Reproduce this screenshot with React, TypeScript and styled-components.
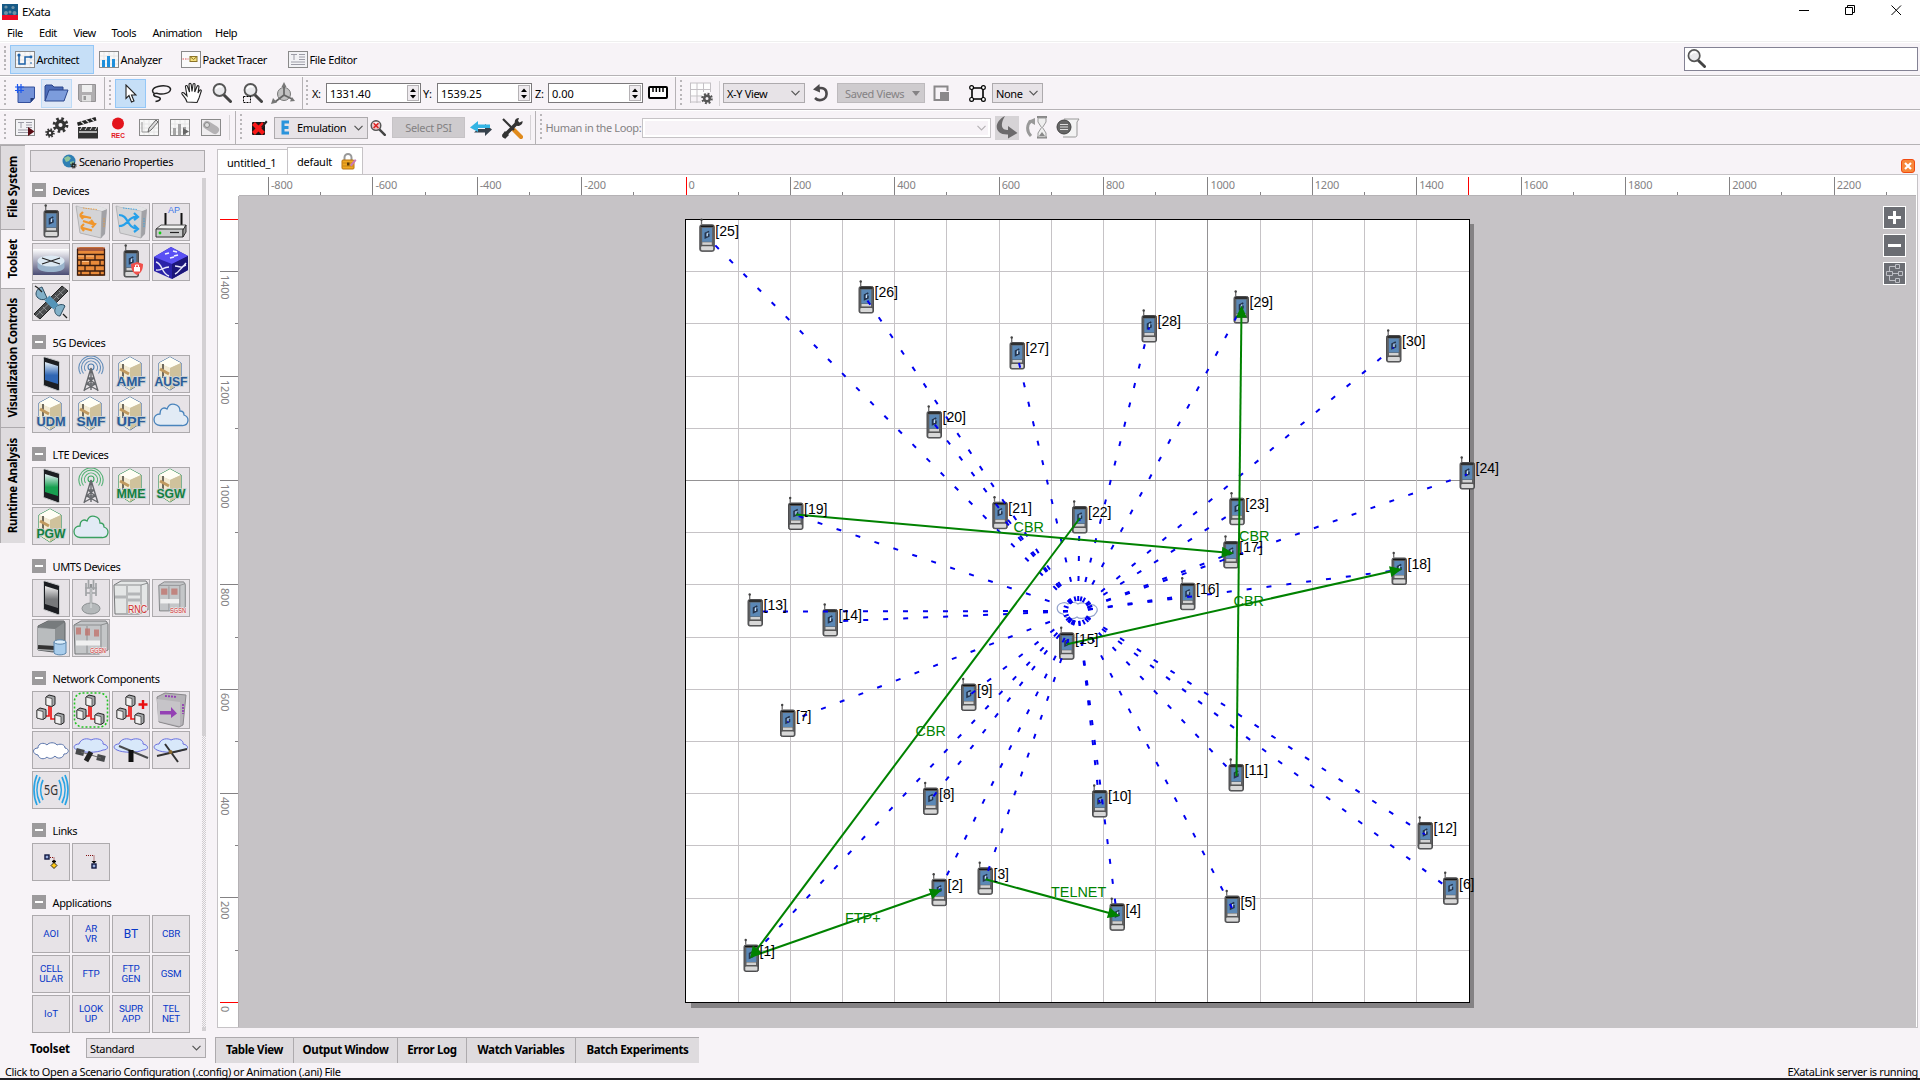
import React from 'react';
import styled, { createGlobalStyle, css } from 'styled-components';

const Global = createGlobalStyle`
  * { box-sizing: border-box; }
  html, body { margin: 0; padding: 0; }
  body { width: 1920px; height: 1080px; overflow: hidden; background: #f7f3f7;
    font-family: 'Noto Sans', 'Open Sans', sans-serif; font-size: 11px; letter-spacing: -0.35px; color: #000; }
  svg { display: block; flex: none; }
  svg text { letter-spacing: 0; }
`;

const Window = styled.div`width: 1920px; height: 1080px; display: flex; flex-direction: column; background: #f7f3f7; overflow: hidden;`;
const TitleBar = styled.div`height: 24px; background: #fff; display: flex; align-items: center; padding-left: 2px;`;
const Title = styled.span`margin: -2px 0 0 4px; flex: 1; font-size: 11.5px;`;
const WinButtons = styled.div`display: flex; gap: 35px; padding-right: 18px; margin-top: -3px;`;
const MenuBar = styled.div`height: 18px; background: #fff; border-bottom: 1px solid #efefef; display: flex; align-items: center; padding-left: 7px; letter-spacing: -0.45px;`;
const MenuItem = styled.span<{ $w: number }>`width: ${p => p.$w}px; white-space: nowrap;`;

const Toolbar = styled.div<{ $h: number }>`height: ${p => p.$h}px; display: flex; align-items: center; border-bottom: 1px solid #b5b2b5; border-top: 1px solid #fff; padding-left: 4px;`;
const Grip = styled.div<{ $ml?: number }>`width: 2px; height: 27px; margin-left: ${p => p.$ml || 0}px; flex: none;
  background: repeating-linear-gradient(#b9b6b9 0 2px, transparent 2px 4.5px);`;
const Sep = styled.div<{ $ml: number }>`width: 1px; align-self: stretch; background: #b5b2b5; margin-left: ${p => p.$ml}px; flex: none;`;
const ThinSep = styled.div<{ $ml: number }>`width: 1px; height: 25px; background: #d6d3d6; margin-left: ${p => p.$ml}px; flex: none;`;
const Slot = styled.div<{ $w: number; $ml?: number; $tone?: 'on' | 'hover' | 'gray' }>`
  width: ${p => p.$w}px; height: 29px; margin-left: ${p => p.$ml || 0}px; display: flex; align-items: center; justify-content: center; flex: none;
  ${p => p.$tone === 'on' && css`background: #c6dff7; border: 1px solid #94c7f7;`}
  ${p => p.$tone === 'hover' && css`background: #dfe8f6; border: 1px solid #bddbf7;`}
  ${p => p.$tone === 'gray' && css`background: #d6d3d6; height: 24px;`}
`;
const ModeButton = styled.div<{ $w: number; $on?: boolean }>`
  width: ${p => p.$w}px; height: 29px; display: flex; align-items: center; gap: 1.5px; padding-left: 4px; flex: none; white-space: nowrap;
  border: 1px solid ${p => (p.$on ? '#94c7f7' : 'transparent')}; background: ${p => (p.$on ? '#c6dff7' : 'transparent')};
`;
const Spacer = styled.div`flex: 1;`;
const SearchBox = styled.div`width: 234px; height: 24px; border: 1px solid #848294; background: #fff; margin-right: 2px; padding: 1px 2px;`;
const Label = styled.span<{ $w: number; $ml?: number; $dim?: boolean }>`width: ${p => p.$w}px; margin-left: ${p => p.$ml || 0}px; white-space: nowrap; flex: none; color: ${p => (p.$dim ? '#848284' : '#000')};`;
const Spin = styled.div<{ $w: number }>`width: ${p => p.$w}px; height: 20px; border: 1px solid #7b797b; background: #fff; display: flex; align-items: center; justify-content: space-between; padding: 0 1px 0 3px; flex: none; letter-spacing: 0;`;
const SpinButtons = styled.div`width: 12px; height: 16px; border: 1px solid #b5b2b5; background: #efebef; display: flex; flex-direction: column; align-items: center; justify-content: space-around;`;
const Combo = styled.div<{ $w: number; $ml?: number; $h?: number; $look?: 'off' | 'empty' }>`
  width: ${p => p.$w}px; height: ${p => p.$h || 20}px; margin-left: ${p => p.$ml || 0}px; display: flex; align-items: center; justify-content: space-between; flex: none; padding: 0 4px 0 3px; white-space: nowrap;
  border: 1px solid #adaaad; background: #e7e3e7;
  ${p => p.$look === 'off' && css`background: #cecbce; border-color: #bdbabd; color: #848284; padding-left: 7px;`}
  ${p => p.$look === 'empty' && css`background: #f7f3f7; border-color: #c6c3c6; box-shadow: inset 0 0 0 2px #fff;`}
`;
const ComboText = styled.span`display: flex; align-items: center; gap: 5px;`;
const PsiButton = styled.div`width: 73px; height: 21px; margin-left: 6px; background: #cecbce; border: 1px solid #c6c3c6; color: #848284; display: flex; align-items: center; justify-content: center; flex: none;`;

const Body = styled.div`flex: 1; display: flex; min-height: 0;`;
const SideTabs = styled.div`width: 25px; display: flex; flex-direction: column; flex: none;`;
const SideTab = styled.div<{ $h: number; $on?: boolean }>`
  height: ${p => p.$h}px; border: 1px solid #adaaad; border-bottom: 0; border-right: 0; background: ${p => (p.$on ? '#f7f3f7' : '#dedbde')};
  display: flex; align-items: center; justify-content: center; padding-right: 2px;
`;
const SideTabText = styled.span`writing-mode: vertical-rl; transform: rotate(180deg); font-weight: 700; font-size: 11.5px; letter-spacing: -0.25px; white-space: nowrap;`;

const Panel = styled.div`width: 190px; padding: 5px 0 0 5px; display: flex; flex-direction: column; flex: none;`;
const ScenarioButton = styled.div`width: 175px; height: 22px; border: 1px solid #adaaad; background: #e7e3e7; display: flex; align-items: center; justify-content: center; gap: 2px; flex: none;`;
const PanelBody = styled.div`display: flex; height: 855px; margin-top: 6px; flex: none;`;
const Sections = styled.div`width: 172px; padding: 5px 0 0 2px; display: flex; flex-direction: column; gap: 14px;`;
const Scroll = styled.div`width: 4px; height: 853px; background: repeating-conic-gradient(#d0cdd0 0 25%, #f7f3f7 0 50%) 0 0 / 2px 2px; display: flex; flex-direction: column; justify-content: space-between;`;
const Thumb = styled.div<{ $h: number }>`height: ${p => p.$h}px; background: #d3d0d3;`;
const Section = styled.div`display: flex; flex-direction: column; gap: 6px;`;
const Head = styled.div`height: 14px; display: flex; align-items: center; gap: 6.5px;`;
const Minus = styled.span`width: 14px; height: 14px; background: #9c9a9c; display: flex; align-items: center; justify-content: center;
  &::after { content: ''; width: 8px; height: 2px; background: #fff; }`;
const Tiles = styled.div`display: grid; grid-template-columns: repeat(4, 38px); grid-auto-rows: 38px; gap: 2px;`;
const Tile = styled.div`border: 1px solid #adaaad; background: #e7e3e7; display: flex; align-items: center; justify-content: center; overflow: hidden;`;
const AppName = styled.span<{ $s?: number }>`font: 400 ${p => p.$s || 9.8}px/10px Roboto, sans-serif; letter-spacing: -0.1px; color: #0838c8; text-align: center; white-space: pre-line;`;
const ToolsetRow = styled.div`display: flex; align-items: center; height: 20px; margin-top: 5px;`;
const Strong = styled.span`font-weight: 700; font-size: 11.5px; width: 56px; letter-spacing: -0.2px;`;

const Editor = styled.div`flex: 1; display: flex; flex-direction: column; min-width: 0;`;
const DocTabs = styled.div`height: 29px; display: flex; align-items: flex-end; padding: 0 5px 0 2px;`;
const DocTab = styled.div<{ $w: number; $h: number }>`width: ${p => p.$w}px; height: ${p => p.$h}px; border: 1px solid #c6c3c6; border-bottom: 0; background: #fff; display: flex; align-items: center; gap: 9px; padding-left: 9px; margin-right: -1px; letter-spacing: -0.2px;`;
const Close = styled.div`margin-bottom: 1px;`;
const View = styled.div`margin: 0 2px 0 2px; border: 1px solid #c6c3c6; background: #fff; height: 854px; display: grid; grid-template: 21px 831px / 21px 1677px; color: #848284; letter-spacing: -0.2px;`;
const RulerX = styled.div`display: flex; align-items: flex-end; overflow: hidden; padding-left: 29px; border-bottom: 1px solid #b5b2b5;`;
const RulerY = styled.div`display: flex; flex-direction: column; align-items: flex-end; overflow: hidden; padding-top: 23px; border-right: 1px solid #b5b2b5; grid-column: 1;`;
const TickX = styled.div<{ $major?: boolean; $red?: boolean }>`width: 52.19px; flex: none; height: ${p => (p.$major || p.$red ? 18 : 3)}px; border-left: 1px solid ${p => (p.$red ? '#f00' : '#848284')}; padding-left: 2px; line-height: 15px;`;
const TickY = styled.div<{ $major?: boolean; $red?: boolean }>`height: 52.2px; flex: none; width: ${p => (p.$major || p.$red ? 18 : 3)}px; border-top: 1px solid ${p => (p.$red ? '#f00' : '#848284')}; padding-top: 3px; line-height: 11px;
  & > span { writing-mode: vertical-rl; display: block; }`;
const Stage = styled.div`grid-row: 2; grid-column: 2; display: grid; background: #c6c3c6;`;
const Canvas = styled.svg`grid-area: 1 / 1;`;
const ZoomButtons = styled.div`grid-area: 1 / 1; justify-self: end; display: flex; flex-direction: column; gap: 5px; padding: 10px 10px 0 0; z-index: 1;`;
const BottomTabs = styled.div`display: flex; margin-top: 9px;`;
const BottomTab = styled.div<{ $w: number }>`width: ${p => p.$w}px; height: 26px; background: #dedbde; border-top: 1px solid #adaaad; border-left: 1px solid #adaaad; font-weight: 700; font-size: 11.5px; letter-spacing: -0.35px; display: flex; align-items: center; justify-content: center; white-space: nowrap; padding-bottom: 2px;`;
const Status = styled.div`height: 16px; border-bottom: 2px solid #211f24; display: flex; justify-content: space-between; align-items: center; padding: 0 2px 0 5px; flex: none; letter-spacing: -0.37px;`;

/* ---------- toolbar glyphs ---------- */
const Chevron = ({ c = '#555' }: { c?: string }) => <svg width="9" height="6" viewBox="0 0 9 6"><path d="M.5.8 4.5 4.8 8.5.8" fill="none" stroke={c} strokeWidth="1.2" /></svg>;
const Magnifier = ({ area, x, s = 20 }: { area?: boolean; x?: boolean; s?: number }) => (
  <svg width={s} height={s} viewBox="0 0 20 20">
    <path d="M12 12l6.5 6.5" stroke="#444" strokeWidth="3" strokeLinecap="round" />
    <circle cx="7.5" cy="7" r="6" fill={x ? '#e9c4c6' : '#e9e9ec'} stroke="#555" strokeWidth="1.8" />
    <path d="M4 6a4 3.5 0 0 1 6-2" stroke="#fff" strokeWidth="1.6" fill="none" />
    {x && <path d="M4.5 4l6 6M10.5 4l-6 6" stroke="#d22" strokeWidth="2" />}
    {area && <path d="M.5 13.5h7v6h-7z" fill="none" stroke="#000" strokeDasharray="2 1" />}
  </svg>
);
const Frame = ({ children }: { children: React.ReactNode }) => (
  <svg width="20" height="17" viewBox="0 0 20 17"><rect x=".5" y=".5" width="19" height="16" fill="#f8f8f8" stroke="#8a8a8a" />
    <path d="M5 1v15M10 1v15M15 1v15M1 5h18M1 9h18M1 13h18" stroke="#e6e6e6" />{children}</svg>
);
const Architect = () => <Frame><path d="M4 4v9h6V6h6" fill="none" stroke="#1d62a8" strokeWidth="1.5" /><circle cx="4" cy="4" r="1.6" fill="#1d62a8" /><circle cx="16" cy="6" r="1.4" fill="#1d62a8" /><path d="M15 12h2" stroke="#1d62a8" /></Frame>;
const Bars = ({ dim }: { dim?: boolean }) => <Frame><path d="M4.5 16V9M9.5 16V5M14.5 16V8" stroke={dim ? '#a5a5a5' : '#1f8fdc'} strokeWidth="3" />{dim && <path d="M13 9l6 3.5-6 3.5z" fill="#666" />}</Frame>;
const Packet = () => <Frame><rect x="1" y="1" width="18" height="15" fill="#fafafa" /><path d="M1.5 8h6" stroke="#e05050" strokeDasharray="1.500 1" /><rect x="9" y="5.500" width="7" height="5" fill="#f5e27f" stroke="#8c7428" /><path d="M9 5.500l3.500 3 3.500-3" fill="none" stroke="#8c7428" /></Frame>;
const Doc = ({ play }: { play?: boolean }) => <Frame><rect x="1" y="1" width="18" height="15" fill="#f2f2f5" /><path d="M3 3.500h6M6 3.500V9M11 3.500h6M11 6h6M11 8.500h6M3 11h14M3 13.500h14" stroke="#9c9ca6" />{play && <path d="M13 8l6.500 4.500L13 17z" fill="#5a0c14" />}</Frame>;
const NewIcon = () => <svg width="20" height="19" viewBox="0 0 20 19"><path d="M3 3h16.500v11l-4 4.500H3z" fill="#7492d8" stroke="#34509c" /><path d="M15.500 18.500V14h4z" fill="#223a78" /><path d="M2.500 0v9M6 0v9M0 3h9M0 6.500h9" stroke="#1c58f0" strokeWidth="1.200" /></svg>;
const OpenIcon = () => <svg width="25" height="18" viewBox="0 0 25 18"><path d="M1 17V2l1-1h6l2 2h9v4" fill="#4c6cb8" stroke="#2c468c" /><path d="M1 17 5 6h19l-4 11z" fill="#7c9cdc" stroke="#2c468c" /></svg>;
const SaveIcon = () => <svg width="18" height="18" viewBox="0 0 18 18"><path d="M.5.5h17v17H2.500l-2-2z" fill="#b0aeb0" stroke="#949294" /><rect x="4" y="1" width="10" height="7" fill="#efefef" /><rect x="4" y="11" width="9" height="6.500" fill="#e2e2e2" /><rect x="5.500" y="12" width="2.500" height="4" fill="#999" /></svg>;
const CursorIcon = () => <svg width="12" height="19" viewBox="0 0 12 19"><path d="M1 1v13.500l3-3 2.500 6.500 2.500-1-2.500-6h4.500z" fill="#fff" stroke="#222" strokeWidth="1.100" /></svg>;
const Lasso = () => <svg width="21" height="19" viewBox="0 0 21 19"><path d="M4 10C0 8 1 4 7 2.500S20 2 19.500 5.500 12 11 7 9.500c-3-1-5 .5-4 2s5 1 6 2.500-1 3-4.500 3.500" fill="none" stroke="#222" strokeWidth="1.500" /></svg>;
const Hand = () => <svg width="22" height="22" viewBox="0 0 22 22"><path d="M6 20c-1-4-4-6-5-8-.6-1.500 1-2 2-1l3 3L4.500 5c-.3-1.600 1.500-2 2-.5L8.500 10 8 2.500C8 1 10 1 10.200 2.500L11 9.500l1-7c.2-1.500 2.200-1.300 2 .2L13.700 10l2.300-5.500c.6-1.500 2.300-.8 1.900.7L17 11l1.500-2.500c.8-1.200 2.200-.5 1.700.8L18 16l-2 4.500z" fill="#fff" stroke="#222" strokeWidth="1.100" /></svg>;
const Axes = () => <svg width="24" height="23" viewBox="0 0 24 23"><circle cx="13" cy="12" r="6.500" fill="#c2c2c2" stroke="#777" /><path d="M13 13V3M13 13l8 4M13 13l-9 7" stroke="#666" strokeWidth="1.700" /><path d="M13 0l2.500 5h-5zM24 19l-5 .5 2-4.500zM0 22l2-6 4 4.500z" fill="#777" /></svg>;
const RulerIcon = () => <svg width="20" height="14" viewBox="0 0 20 14"><rect x="1" y="1" width="18" height="11" rx="1" fill="#fff" stroke="#000" strokeWidth="2" /><path d="M5 1v5M8.300 1v5M11.600 1v5M15 1v5" stroke="#000" strokeWidth="1.500" /></svg>;
const Gear = ({ x, y, r, c = '#444' }: { x: number; y: number; r: number; c?: string }) => <g><circle cx={x} cy={y} r={r * 0.85} fill="none" stroke={c} strokeWidth={r * 0.4} strokeDasharray={`${r * 0.334} ${r * 0.334}`} /><circle cx={x} cy={y} r={r * 0.5} fill="none" stroke={c} strokeWidth={r * 0.45} /></g>;
const GridGear = () => <svg width="25" height="24" viewBox="0 0 25 24"><path d="M1 2h21v9H17v5H1z" fill="#fdfdfd" /><path d="M1 2h21M1 8.500h21M1 15h12M1 21h11M1.500 2v20M8 2v20M14.500 2v9M21.500 2v9" stroke="#c4c1c5" fill="none" /><Gear x={18} y={17.500} r={5.500} c="#555" /></svg>;
const Rotate = () => <svg width="17" height="18" viewBox="0 0 17 18"><path d="M3 14c4 4 11 2 11.500-3.500S11 3 5.500 4.500" fill="none" stroke="#4c4a4c" strokeWidth="2.600" /><path d="M1 5.500 7.500 0 8 8.500z" fill="#4c4a4c" /></svg>;
const Corner = () => <svg width="16" height="16" viewBox="0 0 16 16"><path d="M7 15H1.500V1.500h13V6" fill="none" stroke="#8a888a" strokeWidth="2" /><rect x="7" y="7" width="9" height="9" fill="#8a888a" /></svg>;
const Transform = () => <svg width="17" height="17" viewBox="0 0 17 17"><path d="M3 3h11v11H3z" fill="none" stroke="#000" strokeWidth="1.600" /><g fill="#fff" stroke="#000" strokeWidth="1.200"><circle cx="2.600" cy="2.600" r="1.900" /><circle cx="14.400" cy="2.600" r="1.900" /><circle cx="2.600" cy="14.400" r="1.900" /><circle cx="14.400" cy="14.400" r="1.900" /></g></svg>;
const Gears = () => <svg width="24" height="22" viewBox="0 0 24 22"><Gear x={15.5} y={8} r={7.5} c="#333" /><Gear x={5} y={16} r={4.5} c="#333" /></svg>;
const Clapper = () => <svg width="22" height="22" viewBox="0 0 22 22"><rect x="1" y="10" width="20" height="11.500" fill="#333" /><path d="M1 9 0 5.500 18.500 0l1 3.500z" fill="#222" /><path d="M4 4.500l3 2.500M9 3l3 2.500M14 1.500l3 2.500M2 15h18" stroke="#ddd" strokeWidth="1.300" /><path d="M5 10l-2 3M10 10l-2 3M15 10l-2 3M20 10l-2 3" stroke="#ddd" /></svg>;
const Rec = () => <svg width="16" height="22" viewBox="0 0 16 22"><circle cx="8" cy="6.500" r="6" fill="#e3141c" /><text x="8" y="20.500" fontSize="6.500" fontWeight="700" fontFamily="Liberation Sans, sans-serif" fill="#e3141c" textAnchor="middle">REC</text></svg>;
const EditFrame = () => <Frame><path d="M3 3v10h7" stroke="#999" fill="none" /><path d="M9 13l1-4 7-8 2 2-7 8z" fill="#ddd" stroke="#666" /></Frame>;
const Pill = () => <Frame><rect x="1" y="1" width="18" height="15" fill="#efedef" /><path d="M6 6l8 5" stroke="#b4b2b4" strokeWidth="8" strokeLinecap="round" /><circle cx="6" cy="6" r="2.500" fill="#dcdcdc" stroke="#888" /></Frame>;
const RedX = () => <svg width="17" height="17" viewBox="0 0 17 17"><rect x="1" y="3" width="13" height="13" rx="1" fill="#181818" /><path d="M2.500 4.500l10 10M12.500 4.500l-10 10" stroke="#f81818" strokeWidth="4.200" /><path d="M10 8l5-6.500 1.500 1.500-5 6z" fill="#222" /></svg>;
const SwapArrow = () => <svg width="22" height="16" viewBox="0 0 22 16"><path d="M22 9.500 15 16v-3.500H4l4-3.500h7V4z" fill="#37424c" /><path d="M0 7.500 8 1v3.500h12v3.500H8V12z" fill="#35b4e4" /></svg>;
const Tools = () => <svg width="22" height="22" viewBox="0 0 22 22"><path d="M13 13l7 7" stroke="#e08a1c" strokeWidth="4.200" strokeLinecap="round" /><path d="M2 2l11 11" stroke="#333" strokeWidth="2.200" /><path d="M3 19 16 6" stroke="#333" strokeWidth="3.600" strokeLinecap="round" /><path d="M14 7c-1-4 1-6 4-6l-1 3 1.500 1.500L21.500 4c.5 3-2 5-5 5zM1 18l3-4 4 4-4 4z" fill="#333" /></svg>;
const Swoosh = () => <svg width="22" height="23" viewBox="0 0 22 23"><path d="M9 0C-3 6-2 19 12 18.500V22.500l9.500-5.500-9.500-7v4C5 14.500 4 8 9 0z" fill="#6c6a6c" /></svg>;
const Hourglass = () => <svg width="22" height="23" viewBox="0 0 22 23"><path d="M5 20C0 15 1 8 5 5" fill="none" stroke="#999" strokeWidth="3" /><path d="M2 5l7-3v7z" fill="#999" /><path d="M11 1h10M11 21.500h10" stroke="#888" strokeWidth="2" /><path d="M12 2v4l3.500 5.500L12 17v4h8v-4l-3.500-5.500L20 6V2z" fill="#eee" stroke="#999" /><path d="M13 20l3-4 3 4z" fill="#888" /></svg>;
const Scroll2 = () => <svg width="24" height="20" viewBox="0 0 24 20"><path d="M8 1h15l-2 3v13c0 1.500-1 2-2 2H7" fill="#f3f3f3" stroke="#999" /><circle cx="8" cy="9" r="7" fill="#666" stroke="#444" /><path d="M4 6.500h8M4 9h8M4 11.500h8" stroke="#ddd" strokeWidth="1.200" /></svg>;
const Globe = () => <svg width="15" height="15" viewBox="0 0 15 15"><circle cx="7" cy="7" r="6.500" fill="#2f7fb4" /><path d="M2 4l4-2 3 2-2 3-3 1zM8 8l4-1-1 4-2 1z" fill="#8fc49a" /><Gear x={11.500} y={11.500} r={3} c="#222" /></svg>;
const LockIcon = () => <svg width="16" height="17" viewBox="0 0 16 17"><path d="M3.500 8V4.500a3.500 3.500 0 0 1 7 0V8" fill="none" stroke="#999" strokeWidth="2" /><rect x="1" y="7" width="12" height="9" rx="1" fill="#efa820" stroke="#b87410" /><path d="M1.500 10h11M1.500 13h11" stroke="#c88414" /><path d="M6 9.500h2.500v3H6z" fill="#5a3a08" /><path d="M9 12l5-6 1.500 1.500-5 6z" fill="#c77ab8" /></svg>;
const AppLogo = () => <svg width="16" height="16" viewBox="0 0 16 16"><rect width="16" height="11" fill="#175a86" /><rect y="11" width="16" height="5" fill="#ef0a26" /><g fill="#6f93a8"><circle cx="4" cy="3" r="1.600" /><circle cx="11" cy="3.500" r="1.600" /><circle cx="4" cy="9" r="2" /><circle cx="8" cy="8" r="1.500" /><circle cx="12.500" cy="9" r="2" /></g></svg>;

/* ---------- palette glyphs ---------- */
const Phone = ({ x = 0, y = 0 }) => (
  <g transform={`translate(${x} ${y})`}>
    <path d="M2.200 0v-5" stroke="#6c6a6c" strokeWidth="1.300" /><circle cx="2.200" cy="-4.500" r="1.200" fill="#444" />
    <rect x=".5" y=".5" width="14.500" height="26.500" rx="1.800" fill="#5f6062" stroke="#4c4c4e" />
    <path d="M1.500 2h12.500" stroke="#161616" strokeWidth="1.300" />
    <rect x="2.800" y="3.500" width="10" height="14" fill="#5b88b6" />
    <rect x="3" y="18" width="9.500" height="2.500" fill="#d2d2d2" /><path d="M1 21.300h13.500" stroke="#555" /><rect x="1.800" y="22" width="12" height="4" rx="1" fill="#d8d8d8" />
    <path d="M9.800 7 6 9v4.500l3.500-1.500V9.500" stroke="#26344c" strokeWidth="1.500" fill="none" /><path d="M8 8.500v3.500" stroke="#cfdcec" />
  </g>
);
const S = ({ children }: { children: React.ReactNode }) => <svg width="36" height="36" viewBox="0 0 36 36">{children}</svg>;
const Handset = ({ lock }: { lock?: boolean }) => <S><Phone x={10.500} y={6} />{lock && <g><path d="M18 20l6-2 6 2c0 6-2 9-6 11-4-2-6-5-6-11z" fill="#f0504c" /><rect x="21" y="23" width="6" height="4.500" fill="#fff" /><path d="M22.500 23v-2h3v2" stroke="#fff" fill="none" /></g>}</S>;
const Cube = ({ c, arrows }: { c: string; arrows: string }) => <S><path d="M3 2l20-1 11 4-5 29-22-5z" fill="#c9c9cc" /><path d="M3 2l26 5-1 27L7 29z" fill="#d4d4d6" stroke="#a5a5a8" strokeWidth=".7" /><path d="M29 7l5-2-2 25-4 4z" fill="#a2a2a6" /><path d="M3 2l20-1 11 4-5 2z" fill="#e4e4e6" /><path d={arrows} stroke={c} strokeWidth="2.200" fill="none" /><path d="M10 4l14 1.500M31 14v10" stroke={c} strokeWidth="1" strokeDasharray="1.500 1" opacity=".8" /></S>;
const swapArrows = 'M7 11l3-3M7 11l3 4M7 11.500l11 2.500M16 18l6 2-3 3.500M10 17l11 3.500M18 16l3 4M8 23l3-3M8 23l3 4M8 23.500l11 3';
const crossArrows = 'M6 11c10 0 7 13 19 14M21 21l4 4-4 3M6 22c10 0 8-10 19-9M21 9l4 4-4 3';
const AccessPoint = () => <S><text x="21" y="9" fontSize="9" fontFamily="Liberation Sans, sans-serif" fill="#3f78e8" textAnchor="middle">AP</text><path d="M12.500 9v13M28.500 9v13" stroke="#111" strokeWidth="2" /><path d="M3 25l5-4h25l-3 5z" fill="#f0f0f0" stroke="#555" /><path d="M3 25h27v8H3z" fill="#c9cacb" stroke="#333" /><path d="M30 26l3-5v7l-3 5z" fill="#999" stroke="#333" /><circle cx="7" cy="29" r="1.400" fill="#1c1" /><path d="M17 28.500h9" stroke="#222" strokeWidth="1.200" /></S>;
const RouterIcon = () => <S><defs><linearGradient id="rt" x1="0" y1="0" x2="0" y2="1"><stop offset="0" stopColor="#fff" /><stop offset="1" stopColor="#4a4c74" /></linearGradient></defs><rect x="0" y="5" width="36" height="26" fill="url(#rt)" /><path d="M4.500 17v6c0 3 6 5 13.500 5s13.500-2 13.500-5v-6z" fill="#9ab4cc" /><ellipse cx="18" cy="17" rx="13.500" ry="5.500" fill="#dce9f3" /><path d="M9 14l18 6M27 14 9 20" stroke="#222" strokeWidth="1.200" /></S>;
const Bricks = () => <S><path d="M4 5l3-2h23l2 3v24l-2 2H5z" fill="#e98a3a" /><path d="M4 7V3.500h28V7z" fill="#a4573c" /><g stroke="#3a1c10" strokeWidth="1.300" fill="none"><path d="M4 10.500h28M4 16h28M4 21.500h28M4 27h28M4.500 5v26h27V5M12 10v6M22 10v6M8 16v5M17 16v5M27 16v5M12 21v6M22 21v6M8 27v4M17 27v4M27 27v4" /></g><path d="M5 12h6M13 12h8M9 17.500h7" stroke="#fbc28a" strokeWidth="1.200" /></S>;
const BlueCube = () => <S><path d="M1 13 18 3l17 9v14L19 35 1 27z" fill="#2a22a8" /><path d="M1 13 18 3l17 9-16 8z" fill="#5a50f4" /><path d="M19 20l16-8v14l-16 9z" fill="#1c1678" /><path d="M3 18c7 2 5 11 13 14M3 26c5 1 7-3 13-3M22 22c6 0 6 4 11-3M22 30c5-2 6-8 11-9" stroke="#e8e8fa" strokeWidth="1.400" fill="none" /><path d="M12 10l4-1M17 14l4-1M20 7l4 1M25 11l-4 1" stroke="#f2f2ff" strokeWidth="1.600" /></S>;
const Satellite = () => <S><g><path d="M1 30 29 2l6 5L7 35z" fill="#4a4c4e" stroke="#222" /><path d="M3 32 32 4.500M6 27l4 4M10 23l4 4M22 11l4 4M26 7l4 4" stroke="#8c8e90" /><path d="M3 10c0 4 6 8 11 4L9 3C5 4 3 7 3 10z" fill="#82b0c8" stroke="#2c4c60" /><path d="M22 25c0-4 8-6 10-3l-5 10c-4 0-6-4-5-7z" fill="#82b0c8" stroke="#2c4c60" /><path d="M14 14l9 9" stroke="#5494b8" strokeWidth="7" /><path d="M5 4l-3-2M30 30l4 4M9 8l-4-4" stroke="#222" strokeWidth="1.300" /></g></S>;
const Smart = ({ c, d }: { c: string; d: string }) => <S><defs><linearGradient id={`sm${d}`} x1="0" y1="0" x2="0" y2="1"><stop offset="0" stopColor={d === 'u' ? '#f2f2f2' : '#e8f2f8'} /><stop offset=".6" stopColor={c} /></linearGradient></defs><path d="M12 1l13 4c1 0 1.500 1 1.500 2v26c0 1.500-1 2-2 1.500L12 30c-1 0-1.500-1-1.500-2V2.500c0-1 .5-1.800 1.500-1.500z" fill="#1c1e22" stroke="#c8cacc" /><path d="M12 6l13 4v18l-13-4z" fill={`url(#sm${d})`} /></S>;
const Tower = ({ c }: { c: string }) => <S><g fill="none" stroke={c} strokeWidth="1.100"><circle cx="18" cy="11" r="3" /><path d="M12.500 15a6.500 6.500 0 1 1 11 0M10.500 17.500a9.500 9.500 0 1 1 15 0M7.500 18a12.500 12.500 0 0 1 1.500-14 12 12 0 0 1 18 0 12.500 12.500 0 0 1 1.500 14" opacity=".85" /></g><path d="M18 12 11 35M18 12l7 23M15 22h6M13.500 28h9M15 22l7.500 6M21 22l-7.500 6M13.500 28l11 6M22.500 28l-11 6M18 12v22" stroke="#66686c" strokeWidth="1.400" fill="none" /></S>;
const Server = ({ t, c }: { t: string; c: string }) => <S><path d="M6 7 17 1l11 6v20l-11 7-11-7z" fill="#d9d0b4" stroke={c} strokeWidth="1" /><path d="M6 7 17 1l11 6-11 5z" fill="#fffef4" /><path d="M17 12l11-5v20l-11 7z" fill="#cfc29c" /><path d="M6 7l11 5v22L6 27z" fill="#f2ead2" /><path d="M10 8v14" stroke="#6f6a5e" strokeWidth="2" /><path d="M7 13l9 5" stroke="#c09a60" strokeWidth="3" /><g fontSize="12.800" fontFamily="Liberation Sans, sans-serif" fontWeight="700" textAnchor="middle"><text x="18" y="30" textLength={t.length > 3 ? 33 : 29} lengthAdjust="spacingAndGlyphs" fill={c} stroke="#c9d0d4" strokeWidth="1.800" paintOrder="stroke">{t}</text></g></S>;
const CloudIcon = ({ c }: { c: string }) => <S><path d="M7 29.500C-1 29-1 18 7 18c0-6 4-7 7-5 3-8 13-5 13 2 3 0 4 2 4 4 6 2 5 11-2 10.500z" fill="#e2ebf5" stroke={c} strokeWidth="1.300" /></S>;
const Mast = () => <S><path d="M18 4v26" stroke="#8f9294" strokeWidth="2.500" /><path d="M13 3v13M23 3v13M15.500 0v8M20.500 0v10M12 8h12M13 13h10" stroke="#a0a3a5" strokeWidth="1.700" /><ellipse cx="18" cy="28.500" rx="9" ry="5.500" fill="#b4b8ba" stroke="#8c9092" /><path d="M18 8v20" stroke="#dcdfe0" /></S>;
const Cabinet = ({ t }: { t: string }) => {
  const rnc = t === 'RNC';
  const sg = t === 'SGSN';
  return (
    <S>
      <g transform={sg ? 'translate(5 1) scale(.78 .88)' : undefined}>
        <path d="M1 5 8 1h25l2 3v26l-9 4H2z" fill={rnc ? '#e4e6e6' : '#c4c6c8'} stroke="#77797b" />
        <path d="M1 5h27l7-2M28 5v28M14 6v27" stroke="#8c8e90" fill="none" />
        {rnc ? <path d="M2 17h11M15 14h12M15 20h12" stroke="#b4b6b8" strokeWidth="3" /> : <path d={sg ? 'M4 12h8M17 12h8' : 'M3 11h5M12 12h5M21 13h5'} stroke="#c07068" strokeWidth="7" opacity=".75" />}
        {!rnc && <path d="M3 23h24" stroke="#f0f0f0" strokeWidth="5" />}
      </g>
      <text x={rnc ? 24.500 : 25} y="33" fontSize={rnc ? 10 : 7} fontFamily="Liberation Sans, sans-serif" textAnchor="middle" textLength={rnc ? 19 : 16} lengthAdjust="spacingAndGlyphs" fill="#cf2a2a" stroke="#f4ecec" strokeWidth="1.300" paintOrder="stroke">{t}</text>
    </S>
  );
};
const ServerDb = () => <S><path d="M5 6 15 1h16l1 2v22l-12 7-15-2z" fill="#8c9092" stroke="#5f6264" /><path d="M5 8 22 9v22L5 30z" fill="#b9bcbe" /><path d="M5 7 16 1l16 1-10 7z" fill="#777b7d" /><path d="M5 27l17 1" stroke="#333" strokeWidth="4" /><path d="M21 22v11c2 2.500 10 2.500 12 0V22z" fill="#a9cdec" stroke="#5c86ac" /><ellipse cx="27" cy="22" rx="6" ry="2.200" fill="#dceefb" stroke="#5c86ac" /></S>;
const Box = ({ x, y }: { x: number; y: number }) => <g transform={`translate(${x} ${y})`}><path d="M0 2l3-2 6 1.500v8L6 11.500 0 10z" fill="#a6a8aa" stroke="#222" /><path d="M0 2l6 1.500v8L0 10z" fill="#f0f0f0" stroke="#444" strokeWidth=".8" /></g>;
const Cluster = ({ kind }: { kind?: 'dots' | 'plus' }) => <S>{kind === 'dots' && <rect x="1.500" y="1" width="33" height="34" rx="8" fill="none" stroke="#22c322" strokeWidth="1.600" strokeDasharray="2 2" />}<path d="M16 12v12h-5M18 12v15h5" stroke="#f01818" strokeWidth="1.700" fill="none" /><Box x={13} y={3} /><Box x={4} y={16} /><Box x={22} y={21} />{kind === 'plus' && <path d="M30 8v9M25.500 12.500h9" stroke="#e81010" strokeWidth="2.400" />}</S>;
const PurpleCube = () => <S><path d="M4 5 12 1l21 2-3 30-4 2L6 30z" fill="#b5b3b7" stroke="#8a888c" /><path d="M4 7l23 3v24L5 29z" fill="#c6c4c8" /><path d="M7 19h11v-4l6 6.500-6 4.500v-3.500H7z" fill="#9440b4" /><path d="M12 4l12 1M30 12v10" stroke="#9440b4" strokeWidth="1.800" strokeDasharray="2 1" /></S>;
const scallop = 'M5 23c-6-1-6-7 0-7 0-5 6-6 9-3 2-3 8-3 10 0 4-2 8 0 8 3 5 1 4 6-1 6-1 5-7 5-9 2-3 3-6 3-8 1-3 3-8 2-9-2z';
const NetCloud = ({ kind }: { kind?: 'sat' | 'prop' | 'cross' }) => <S><path d={kind ? 'M4 18c-5-2-3-6 2-6 2-6 9-6 12-4 6-3 13 0 12 4 6 1 6 6 0 6-6 3-20 3-26 0z' : scallop} fill={kind ? '#d8e8fa' : '#fff'} stroke={kind ? '#6a70e0' : '#5b76ac'} />{kind === 'sat' && <g><path d="M3 19l8 2M24 25l8 2" stroke="#47494b" strokeWidth="6" /><path d="M8 20l20 6" stroke="#666" /><path d="M18 20l-5 9" stroke="#222" strokeWidth="5" /></g>}{kind === 'prop' && <g><path d="M6 14l29 12" stroke="#4a4c4e" strokeWidth="2" /><path d="M18 18v12" stroke="#111" strokeWidth="5" /></g>}{kind === 'cross' && <g><path d="M4 24l30-7M12 12l13 18" stroke="#333" strokeWidth="2" /><circle cx="17.500" cy="20" r="2" fill="#8a6a30" /></g>}</S>;
const FiveG = () => <S><text x="18" y="22.500" fontSize="13.500" fontFamily="Noto Sans, sans-serif" textAnchor="middle" textLength="14" lengthAdjust="spacingAndGlyphs" fill="#333">5G</text><g fill="none" stroke="#2aa4e4" strokeWidth="1.700"><path d="M10 8c-3 6-3 14 0 20M7 5c-4 8-4 18 0 26M4 3c-4 9-4 21 0 30M26 8c3 6 3 14 0 20M29 5c4 8 4 18 0 26M32 3c4 9 4 21 0 30" /></g></S>;
const LinkIcon = ({ diamond }: { diamond?: boolean }) => <S>{diamond ? <g><rect x="12" y="11" width="4" height="4" fill="#9ab0e0" stroke="#101840" strokeWidth="1.400" /><path d="M17 13.500h4v3" stroke="#801010" strokeDasharray="1 1" fill="none" /><path d="M21 16v3M19 17.500h4" stroke="#000" strokeWidth="1.500" /><path d="M21 18.500l3 3-3 3-3-3z" fill="#ffc818" stroke="#000" strokeWidth=".8" /></g> : <g><path d="M13 11.500h8v5" stroke="#801010" strokeDasharray="1 1" fill="none" /><path d="M18.500 17h5l-2.500 2.500z" fill="#000" /><rect x="19" y="20" width="4" height="4" fill="#9ab0e0" stroke="#101840" strokeWidth="1.400" /></g>}</S>;

const blue = '#2a5c98';
const green = '#138040';
const sections: { name: string; items: React.ReactNode[] }[] = [
  { name: 'Devices', items: [<Handset />, <Cube c="#f0962c" arrows={swapArrows} />, <Cube c="#26a0ea" arrows={crossArrows} />, <AccessPoint />, <RouterIcon />, <Bricks />, <Handset lock />, <BlueCube />, <Satellite />] },
  { name: '5G Devices', items: [<Smart c="#2f66b4" d="b" />, <Tower c="#4a7cb0" />, <Server t="AMF" c={blue} />, <Server t="AUSF" c={blue} />, <Server t="UDM" c={blue} />, <Server t="SMF" c={blue} />, <Server t="UPF" c={blue} />, <CloudIcon c="#4a84bc" />] },
  { name: 'LTE Devices', items: [<Smart c="#18a050" d="g" />, <Tower c="#3aa860" />, <Server t="MME" c={green} />, <Server t="SGW" c={green} />, <Server t="PGW" c={green} />, <CloudIcon c="#3aa060" />] },
  { name: 'UMTS Devices', items: [<Smart c="#77797b" d="u" />, <Mast />, <Cabinet t="RNC" />, <Cabinet t="SGSN" />, <ServerDb />, <Cabinet t="GGSN" />] },
  { name: 'Network Components', items: [<Cluster />, <Cluster kind="dots" />, <Cluster kind="plus" />, <PurpleCube />, <NetCloud />, <NetCloud kind="sat" />, <NetCloud kind="prop" />, <NetCloud kind="cross" />, <FiveG />] },
  { name: 'Links', items: [<LinkIcon diamond />, <LinkIcon />] },
  { name: 'Applications', items: ['AOI', 'AR\nVR', 'BT', 'CBR', 'CELL\nULAR', 'FTP', 'FTP\nGEN', 'GSM', 'IoT', 'LOOK\nUP', 'SUPR\nAPP', 'TEL\nNET'].map(t => <AppName $s={t === 'BT' ? 12 : undefined}>{t}</AppName>) },
];

/* ---------- scenario ---------- */
const nodes: Record<number, [number, number]> = {
  1: [751, 957.5], 2: [939, 891.7], 3: [985, 880.3], 4: [1117, 916.3], 5: [1232, 908.5], 6: [1450.5, 890.3], 7: [787.5, 722.5],
  8: [930.5, 800.5], 9: [968.5, 696.5], 10: [1099.5, 803], 11: [1236, 777], 12: [1425, 835], 13: [755, 612], 14: [830, 622],
  15: [1066.5, 645.3], 16: [1187.5, 595.7], 17: [1230.8, 554], 18: [1399, 570.5], 19: [795.5, 515.5], 20: [934, 424], 21: [999.8, 514.7],
  22: [1079.5, 519], 23: [1236.8, 510.7], 24: [1467, 475], 25: [706.8, 237.3], 26: [866, 299], 27: [1017, 355], 28: [1149, 328], 29: [1241, 309], 30: [1393.5, 348],
};
const hub = [1078, 611];
const flows: { from: number; to: number; text: string; x: number; y: number }[] = [
  { from: 19, to: 17, text: 'CBR', x: 1013.5, y: 532 },
  { from: 22, to: 1, text: 'CBR', x: 915.5, y: 736 },
  { from: 1, to: 2, text: 'FTP+', x: 845, y: 923 },
  { from: 3, to: 4, text: 'TELNET', x: 1051, y: 897 },
  { from: 15, to: 18, text: 'CBR', x: 1233.5, y: 606 },
  { from: 11, to: 29, text: 'CBR', x: 1239, y: 541 },
];

const Scenario = () => {
  const ids = Object.keys(nodes).map(Number);
  return (
    <Canvas width="1677" height="831" viewBox="239 196 1677 831">
      <rect x="691" y="224" width="783" height="784" fill="#848284" />
      <rect x="685.5" y="219.5" width="784" height="783" fill="#fff" stroke="#000" />
      {Array.from({ length: 14 }, (_, i) => i + 1).map(i => {
        const x = Math.round(685.35 + 52.2 * i) + 0.5;
        const y = Math.round(1002 - 52.2 * i) + 0.5;
        return (
          <g key={i} stroke={i === 10 ? '#949294' : '#c6c3c6'}>
            <path d={`M${x} 220V1002`} />
            <path d={`M686 ${y}H1469`} />
          </g>
        );
      })}
      <path d="M1063 614c-7-1-8-9-1-11 3-1 5 0 6 1 3-2 8-2 10 0 3-2 9-1 10 1 8-2 11 4 8 8-2 4-7 4-9 3-2 3-8 3-10 1-4 3-12 2-14-3z" fill="#fff" stroke="#93a3cc" strokeWidth="1.200" />
      {ids.map(n => <Phone key={n} x={nodes[n][0] - 7.5} y={nodes[n][1] - 13} />)}
      {ids.map(n => <line key={n} x1={hub[0]} y1={hub[1]} x2={nodes[n][0]} y2={nodes[n][1] - 0.5} stroke="#0000f0" strokeWidth="2" strokeDasharray="5 15" strokeDashoffset="-10" />)}
      {flows.map((f, i) => {
        const [x1, y1] = nodes[f.from];
        const [x2, y2] = nodes[f.to];
        const a = Math.atan2(y2 - y1, x2 - x1) * 180 / Math.PI;
        return (
          <g key={i}>
            <line x1={x1 + 0.5} y1={y1 - 1} x2={x2 + 0.5} y2={y2 - 1} stroke="#008200" strokeWidth="2" />
            <path d="M2.500 0-9.500-5.500V5.500z" transform={`translate(${x2 + 0.5} ${y2 - 1}) rotate(${a})`} fill="#008200" />
          </g>
        );
      })}
      <g fontFamily="Liberation Sans, sans-serif" fontSize="14.400">
        {flows.map((f, i) => <text key={i} x={f.x} y={f.y} fill="#008200">{f.text}</text>)}
        {ids.map(n => <text key={n} x={nodes[n][0] + 8.5} y={nodes[n][1] - 1.8} fontSize="14.800" textLength={n > 9 ? 23.5 : 15.5} lengthAdjust="spacingAndGlyphs">[{n}]</text>)}
      </g>
    </Canvas>
  );
};

const SpinBox = ({ w, v }: { w: number; v: string }) => (
  <Spin $w={w}>{v}<SpinButtons><svg width="6" height="4"><path d="M0 4h6L3 .5z" /></svg><svg width="6" height="4"><path d="M0 0h6L3 3.500z" /></svg></SpinButtons></Spin>
);
const ZoomKey = ({ d, w }: { d: string; w: number }) => (
  <svg width="23" height="23" viewBox="0 0 23 23"><rect x=".5" y=".5" width="22" height="22" fill="#6b6d73" stroke="#fff" /><path d={d} fill="none" stroke={w > 1 ? '#fff' : '#bdbec4'} strokeWidth={w} /></svg>
);

export default function App() {
  const xs = Array.from({ length: 32 }, (_, i) => -800 + i * 100);
  const ys = Array.from({ length: 16 }, (_, i) => 1500 - i * 100);
  return (
    <Window>
      <Global />
      <TitleBar>
        <AppLogo /><Title>EXata</Title>
        <WinButtons>
          <svg width="11" height="11"><path d="M0 5.500h10" stroke="#000" /></svg>
          <svg width="11" height="11"><path d="M.5 2.500h7v7h-7zM2.500 2V.500h7v7H8" fill="none" stroke="#000" /></svg>
          <svg width="11" height="11"><path d="M.5.5l9.500 9.500M10 .5.5 10" stroke="#000" /></svg>
        </WinButtons>
      </TitleBar>
      <MenuBar>
        <MenuItem $w={32}>File</MenuItem><MenuItem $w={34.5}>Edit</MenuItem><MenuItem $w={38}>View</MenuItem>
        <MenuItem $w={41}>Tools</MenuItem><MenuItem $w={62.5}>Animation</MenuItem><MenuItem $w={40}>Help</MenuItem>
      </MenuBar>
      <Toolbar $h={34}>
        <Grip /><Slot $w={4} />
        <ModeButton $w={84} $on><Architect />Architect</ModeButton>
        <ModeButton $w={82}><Bars />Analyzer</ModeButton>
        <ModeButton $w={107}><Packet />Packet Tracer</ModeButton>
        <ModeButton $w={90}><Doc />File Editor</ModeButton>
        <Spacer /><SearchBox><Magnifier s={19} /></SearchBox>
      </Toolbar>
      <Toolbar $h={34}>
        <Grip /><Slot $w={31} $ml={3}><NewIcon /></Slot><Slot $w={31} $ml={1} $tone="hover"><OpenIcon /></Slot><Slot $w={29}><SaveIcon /></Slot>
        <Sep $ml={3} /><Grip $ml={4} />
        <Slot $w={31} $ml={4} $tone="on"><CursorIcon /></Slot><Slot $w={30.5}><Lasso /></Slot><Slot $w={30.5}><Hand /></Slot><Slot $w={30.5}><Magnifier /></Slot><Slot $w={30.5}><Magnifier area /></Slot><Slot $w={30.5}><Axes /></Slot>
        <Sep $ml={3.5} /><Grip $ml={3} />
        <Label $w={14} $ml={4}>X:</Label><SpinBox w={95} v="1331.40" />
        <Label $w={14} $ml={2}>Y:</Label><SpinBox w={95} v="1539.25" />
        <Label $w={13} $ml={3}>Z:</Label><SpinBox w={95} v="0.00" />
        <Slot $w={20} $ml={5}><RulerIcon /></Slot>
        <Sep $ml={7} /><Grip $ml={4} /><Slot $w={25} $ml={7}><GridGear /></Slot><ThinSep $ml={5} />
        <Combo $w={82} $ml={3}>X-Y View<Chevron /></Combo>
        <Slot $w={17} $ml={7}><Rotate /></Slot>
        <Combo $w={88} $ml={8} $look="off">Saved Views<svg width="8" height="5"><path d="M0 0h8L4 5z" fill="#848284" /></svg></Combo>
        <Slot $w={16} $ml={8}><Corner /></Slot><Slot $w={17} $ml={20}><Transform /></Slot>
        <Combo $w={51} $ml={6}>None<Chevron /></Combo>
      </Toolbar>
      <Toolbar $h={35}>
        <Grip /><Slot $w={31} $ml={3}><Doc play /></Slot><Slot $w={31} $ml={1}><Gears /></Slot><Slot $w={31}><Clapper /></Slot><Slot $w={30}><Rec /></Slot><Slot $w={31}><EditFrame /></Slot><Slot $w={31}><Bars dim /></Slot><Slot $w={31}><Pill /></Slot>
        <ThinSep $ml={3} /><Sep $ml={5} /><Grip $ml={4} />
        <Slot $w={17} $ml={8.5}><RedX /></Slot>
        <Combo $w={94} $ml={6.5} $h={22}><ComboText><svg width="14" height="15"><path d="M11 2H5v11h6M5 7.500h5.500" fill="none" stroke="#2a94dc" strokeWidth="3" /></svg>Emulation</ComboText><Chevron /></Combo>
        <Slot $w={17} $ml={1}><Magnifier x s={16} /></Slot><PsiButton>Select PSI</PsiButton>
        <Slot $w={22} $ml={5}><SwapArrow /></Slot><Slot $w={22} $ml={8.5}><Tools /></Slot>
        <ThinSep $ml={7} /><Sep $ml={4} /><Grip $ml={4} />
        <Label $w={93} $ml={4} $dim>Human in the Loop:</Label>
        <Combo $w={349} $ml={3.5} $look="empty"><span /><Chevron c="#b5b2b5" /></Combo>
        <Slot $w={24} $ml={4} $tone="gray"><Swoosh /></Slot><Slot $w={22} $ml={7}><Hourglass /></Slot><Slot $w={24} $ml={8}><Scroll2 /></Slot>
      </Toolbar>
      <Body>
        <SideTabs>
          <SideTab $h={84}><SideTabText>File System</SideTabText></SideTab>
          <SideTab $h={59} $on><SideTabText>Toolset</SideTabText></SideTab>
          <SideTab $h={139}><SideTabText>Visualization Controls</SideTabText></SideTab>
          <SideTab $h={116}><SideTabText>Runtime Analysis</SideTabText></SideTab>
        </SideTabs>
        <Panel>
          <ScenarioButton><Globe />Scenario Properties</ScenarioButton>
          <PanelBody>
            <Sections>
              {sections.map(s => (
                <Section key={s.name}>
                  <Head><Minus />{s.name}</Head>
                  <Tiles>{s.items.map((it, i) => <Tile key={i}>{it}</Tile>)}</Tiles>
                </Section>
              ))}
            </Sections>
            <Scroll><Thumb $h={558} /><Thumb $h={4} /></Scroll>
          </PanelBody>
          <ToolsetRow><Strong>Toolset</Strong><Combo $w={120}>Standard<Chevron /></Combo></ToolsetRow>
        </Panel>
        <Editor>
          <DocTabs>
            <DocTab $w={71} $h={25}>untitled_1</DocTab><DocTab $w={76} $h={27}>default<LockIcon /></DocTab>
            <Spacer />
            <Close><svg width="14" height="14"><rect x=".5" y=".5" width="13" height="13" rx="2.500" fill="#f7883a" stroke="#f04a10" /><path d="M4 4l6 6M10 4l-6 6" stroke="#fff" strokeWidth="2.200" /></svg></Close>
          </DocTabs>
          <View>
            <span />
            <RulerX>{xs.map(v => <TickX key={v} $major={v % 200 === 0} $red={v === 0 || v === 1500}>{v % 200 === 0 ? v : ''}</TickX>)}</RulerX>
            <RulerY>{ys.map(v => <TickY key={v} $major={v % 200 === 0} $red={v === 0 || v === 1500}>{v % 200 === 0 && <span>{v}</span>}</TickY>)}</RulerY>
            <Stage>
              <Scenario />
              <ZoomButtons>
                <ZoomKey w={3} d="M11.500 5v13M5 11.500h13" />
                <ZoomKey w={3} d="M5 11.500h13" />
                <ZoomKey w={1} d="M3.500 9.500h6v4h-6zM15.500 9.500h4v4h-4zM12.500 2.500h4v4h-4zM12.500 16.500h4v4h-4zM9.500 11.500h6M6.500 9V4.500h6M6.500 14v4.500h6" />
              </ZoomButtons>
            </Stage>
          </View>
          <BottomTabs>
            <BottomTab $w={78}>Table View</BottomTab><BottomTab $w={104}>Output Window</BottomTab><BottomTab $w={69}>Error Log</BottomTab><BottomTab $w={109}>Watch Variables</BottomTab><BottomTab $w={124}>Batch Experiments</BottomTab>
          </BottomTabs>
        </Editor>
      </Body>
      <Status><span>Click to Open a Scenario Configuration (.config) or Animation (.ani) File</span><span>EXataLink server is running</span></Status>
    </Window>
  );
}
